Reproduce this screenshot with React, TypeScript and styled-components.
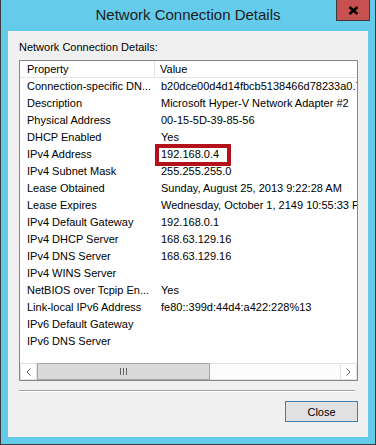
import styled, { createGlobalStyle } from 'styled-components';

const rows: { name: string; value: string; mark?: boolean }[] = [
  { name: 'Connection-specific DN...', value: 'b20dce00d4d14fbcb5138466d78233a0.7c4b.internal.cloudapp.net' },
  { name: 'Description', value: 'Microsoft Hyper-V Network Adapter #2' },
  { name: 'Physical Address', value: '00-15-5D-39-85-56' },
  { name: 'DHCP Enabled', value: 'Yes' },
  { name: 'IPv4 Address', value: '192.168.0.4', mark: true },
  { name: 'IPv4 Subnet Mask', value: '255.255.255.0' },
  { name: 'Lease Obtained', value: 'Sunday, August 25, 2013 9:22:28 AM' },
  { name: 'Lease Expires', value: 'Wednesday, October 1, 2149 10:55:33 PM' },
  { name: 'IPv4 Default Gateway', value: '192.168.0.1' },
  { name: 'IPv4 DHCP Server', value: '168.63.129.16' },
  { name: 'IPv4 DNS Server', value: '168.63.129.16' },
  { name: 'IPv4 WINS Server', value: '' },
  { name: 'NetBIOS over Tcpip En...', value: 'Yes' },
  { name: 'Link-local IPv6 Address', value: 'fe80::399d:44d4:a422:228%13' },
  { name: 'IPv6 Default Gateway', value: '' },
  { name: 'IPv6 DNS Server', value: '' },
];

export default function App() {
  return (
    <>
      <GlobalStyle />
      <Window>
        <TitleBar>Network Connection Details</TitleBar>
        <CloseX aria-label="Close">
          <svg width="11" height="9" viewBox="0 0 11 9">
            <path d="M1.5 1 L9.5 8 M9.5 1 L1.5 8" stroke="#000" strokeWidth="2.4" />
          </svg>
        </CloseX>
        <Client>
          <Label>Network Connection Details:</Label>
          <ListBox>
            <HeaderRow>
              <HeaderCell $divider>Property</HeaderCell>
              <HeaderCell>Value</HeaderCell>
            </HeaderRow>
            <Rows>
              {rows.map((r) => (
                <Row key={r.name}>
                  <NameCell>{r.name}</NameCell>
                  <ValueCell $mark={r.mark}>{r.value}</ValueCell>
                </Row>
              ))}
            </Rows>
            <ScrollBar>
              <ArrowButton>
                <svg width="5" height="8" viewBox="0 0 5 8">
                  <path d="M4.5 0.5 L1 4 L4.5 7.5" stroke="#606060" fill="none" />
                </svg>
              </ArrowButton>
              <Thumb>
                <Grip />
                <Grip />
                <Grip />
              </Thumb>
              <Track />
              <ArrowButton>
                <svg width="5" height="8" viewBox="0 0 5 8">
                  <path d="M0.5 0.5 L4 4 L0.5 7.5" stroke="#606060" fill="none" />
                </svg>
              </ArrowButton>
            </ScrollBar>
          </ListBox>
          <Separator />
          <Footer>
            <PushButton>Close</PushButton>
          </Footer>
        </Client>
      </Window>
    </>
  );
}

const GlobalStyle = createGlobalStyle`
  html, body {
    margin: 0;
    padding: 0;
    background: #ffffff;
  }
  body {
    font-family: "Liberation Sans", Arial, sans-serif;
  }
`;

const Window = styled.div`
  position: relative;
  width: 376px;
  height: 445px;
  box-sizing: border-box;
  background: #65cbeb;
  border: 1px solid #3a3a3a;
  border-top: none;
  padding: 0 7px 7px;
  display: flex;
  flex-direction: column;
`;

const TitleBar = styled.div`
  height: 31px;
  padding-bottom: 3px;
  box-sizing: border-box;
  display: flex;
  align-items: center;
  justify-content: center;
  font-size: 15px;
  color: #1e1e1e;
`;

const CloseX = styled.div`
  position: absolute;
  top: 0;
  right: 5px;
  width: 34px;
  height: 21px;
  box-sizing: border-box;
  background: #c75050;
  border: 1px solid #3c3c3c;
  border-top: none;
  display: flex;
  align-items: center;
  justify-content: center;
`;

const Client = styled.div`
  flex: 1;
  background: #f0f0f0;
  padding: 10px 10px 15px 11px;
  display: flex;
  flex-direction: column;
  font-size: 11px;
  color: #000;
`;

const Label = styled.div`
  height: 13px;
  line-height: 13px;
  margin-bottom: 6px;
`;

const ListBox = styled.div`
  height: 321px;
  box-sizing: border-box;
  border: 1px solid #828790;
  background: #ffffff;
  display: flex;
  flex-direction: column;
  overflow: hidden;
`;

const HeaderRow = styled.div`
  display: grid;
  grid-template-columns: 135px 1fr;
  height: 16px;
  border-bottom: 1px solid #e5e5e5;
`;

const HeaderCell = styled.div<{ $divider?: boolean }>`
  line-height: 16px;
  padding-left: ${(p) => (p.$divider ? '7px' : '5px')};
  border-right: ${(p) => (p.$divider ? '1px solid #e5e5e5' : 'none')};
  white-space: nowrap;
`;

const Rows = styled.div`
  flex: 1;
`;

const Row = styled.div`
  display: grid;
  grid-template-columns: 136px 1fr;
  height: 17px;
  line-height: 17px;
`;

const NameCell = styled.div`
  padding-left: 7px;
  white-space: nowrap;
  overflow: hidden;
`;

const ValueCell = styled.div<{ $mark?: boolean }>`
  position: relative;
  padding-left: 5px;
  white-space: nowrap;

  ${(p) =>
    p.$mark &&
    `
    &::after {
      content: '';
      position: absolute;
      left: -1px;
      top: -2px;
      width: 76px;
      height: 22px;
      box-sizing: border-box;
      border: 4px solid #b3121a;
    }
  `}
`;

const ScrollBar = styled.div`
  display: flex;
  height: 17px;
  background: #fcfcfc;
  border-top: 1px solid #fff;
`;

const ArrowButton = styled.div`
  width: 17px;
  box-sizing: border-box;
  border: 1px solid #e3e3e3;
  background: #ffffff;
  display: flex;
  align-items: center;
  justify-content: center;
`;

const Thumb = styled.div`
  width: 173px;
  box-sizing: border-box;
  background: #dadada;
  border: 1px solid #a6a6a6;
  display: flex;
  align-items: center;
  justify-content: center;
  gap: 2px;
`;

const Grip = styled.span`
  width: 1px;
  height: 7px;
  background: #606060;
`;

const Track = styled.div`
  flex: 1;
  border-top: 1px solid #e3e3e3;
  border-bottom: 1px solid #e3e3e3;
`;

const Separator = styled.div`
  margin: 9px 3px 0 0;
  height: 1px;
  background: #a0a0a0;
  border-bottom: 1px solid #ffffff;
`;

const Footer = styled.div`
  margin-top: 9px;
  display: flex;
  justify-content: flex-end;
`;

const PushButton = styled.button`
  width: 73px;
  height: 21px;
  box-sizing: border-box;
  border: 1px solid #3c7fb1;
  background: #e1e1e1;
  font-family: "Liberation Sans", Arial, sans-serif;
  font-size: 11px;
  color: #000;
  padding: 0;
  margin: 0;
`;
